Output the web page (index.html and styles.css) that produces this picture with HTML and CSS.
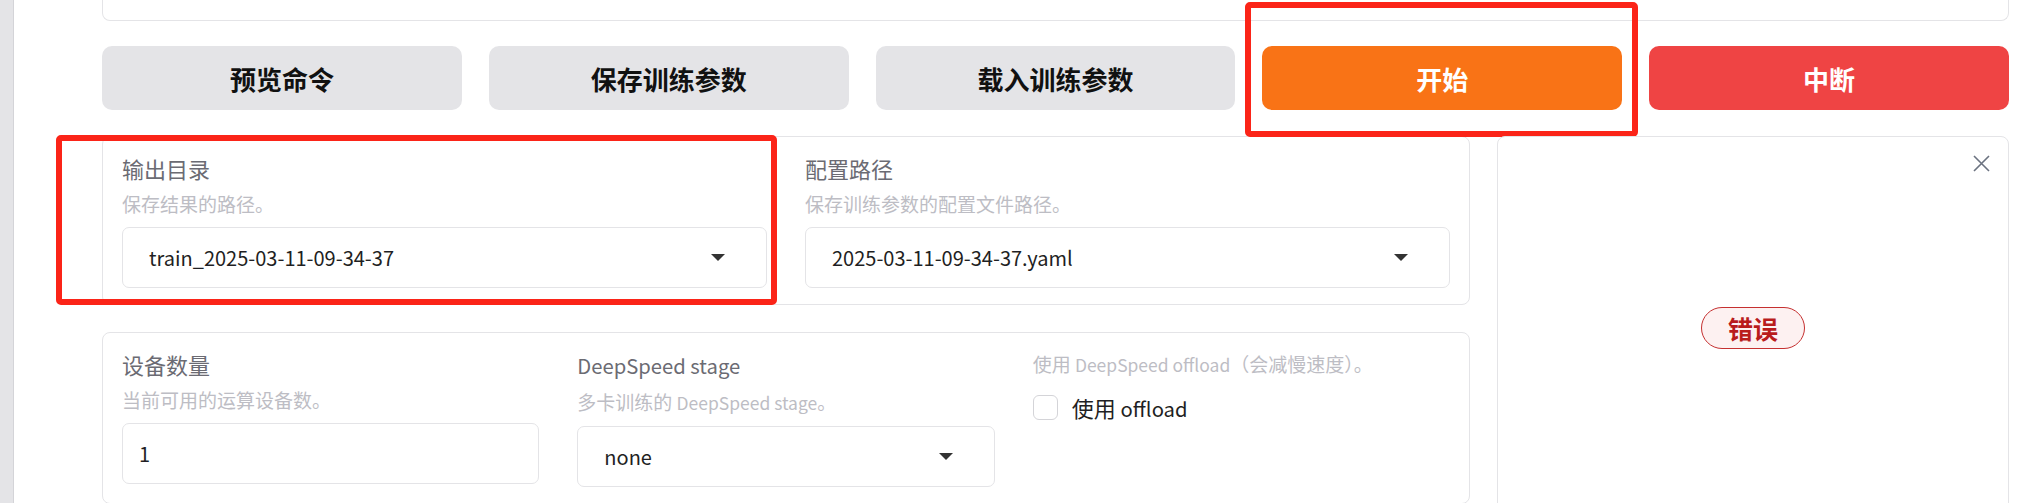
FILE: index.html
```html
<!DOCTYPE html>
<html lang="zh-CN">
<head>
<meta charset="utf-8">
<title>训练</title>
<link rel="stylesheet" href="styles.css">
</head>
<body>
<div class="page">
  <div class="rail"></div>
  <main class="main">
    <div class="top-card"></div>

    <div class="actions">
      <button class="btn btn-gray">预览命令</button>
      <button class="btn btn-gray">保存训练参数</button>
      <button class="btn btn-gray">载入训练参数</button>
      <div class="btn-wrap mark-start">
        <button class="btn btn-primary">开始</button>
      </div>
      <button class="btn btn-stop">中断</button>
    </div>

    <div class="panel-grid">
      <div class="left-col">
        <section class="card cols-2">
          <div class="field mark-field">
            <div class="label">输出目录</div>
            <div class="info">保存结果的路径。</div>
            <div class="dropdown">
              <span class="value">train_2025-03-11-09-34-37</span>
              <svg class="caret" width="14" height="7" viewBox="0 0 14 7"><polygon points="0,0 14,0 7,7" fill="#333"/></svg>
            </div>
          </div>
          <div class="field">
            <div class="label">配置路径</div>
            <div class="info">保存训练参数的配置文件路径。</div>
            <div class="dropdown">
              <span class="value">2025-03-11-09-34-37.yaml</span>
              <svg class="caret" width="14" height="7" viewBox="0 0 14 7"><polygon points="0,0 14,0 7,7" fill="#333"/></svg>
            </div>
          </div>
        </section>

        <section class="card cols-3">
          <div class="field">
            <div class="label">设备数量</div>
            <div class="info">当前可用的运算设备数。</div>
            <div class="textbox"><span class="value">1</span></div>
          </div>
          <div class="field">
            <div class="label"><span class="latin">DeepSpeed stage</span></div>
            <div class="info">多卡训练的 <span class="latin">DeepSpeed stage</span>。</div>
            <div class="dropdown">
              <span class="value">none</span>
              <svg class="caret" width="14" height="7" viewBox="0 0 14 7"><polygon points="0,0 14,0 7,7" fill="#333"/></svg>
            </div>
          </div>
          <div class="field">
            <div class="info info-top">使用 <span class="latin">DeepSpeed offload</span>（会减慢速度）。</div>
            <label class="check-row">
              <span class="checkbox"></span>
              <span class="check-label">使用 <span class="latin">offload</span></span>
            </label>
          </div>
        </section>
      </div>

      <aside class="card status-card">
        <button class="close" aria-label="关闭">
          <svg width="17" height="17" viewBox="0 0 17 17"><path d="M1 1 L16 16 M16 1 L1 16" stroke="#6b7280" stroke-width="1.6" fill="none"/></svg>
        </button>
        <span class="badge">错误</span>
      </aside>
    </div>
  </main>
</div>
</body>
</html>
```

FILE: styles.css
```css
* {
  box-sizing: border-box;
}

html, body {
  margin: 0;
  padding: 0;
  background: #ffffff;
  font-family: "Noto Sans CJK SC", "Noto Sans", sans-serif;
  overflow: hidden;
}

.page {
  display: flex;
  min-height: 503px;
}

.rail {
  width: 14px;
  flex: none;
  background: #e4e4e7;
  border-right: 1px solid #d4d4d8;
}

.main {
  flex: 1;
  padding: 0 34px 0 88px;
  display: flex;
  flex-direction: column;
}

.top-card {
  height: 21px;
  border: 1px solid #e4e4e7;
  border-top: none;
  border-radius: 0 0 8px 8px;
  margin-bottom: 25px;
}

.actions {
  display: grid;
  grid-template-columns: repeat(5, 1fr);
  gap: 27px;
  margin-bottom: 26px;
}

.btn {
  height: 64px;
  width: 100%;
  border: none;
  border-radius: 10px;
  font-family: "Noto Sans CJK SC", sans-serif;
  font-size: 26px;
  font-weight: 700;
  cursor: pointer;
}

.btn-gray {
  background: #e4e4e7;
  color: #111111;
}

.btn-primary {
  background: #f97316;
  color: #ffffff;
}

.btn-stop {
  background: #ef4444;
  color: #ffffff;
}

.btn-wrap {
  position: relative;
}

.mark-start::after {
  content: "";
  position: absolute;
  left: -17px;
  right: -16px;
  top: -44px;
  bottom: -27px;
  border: 6px solid #fb2418;
  border-radius: 5px;
  pointer-events: none;
}

.panel-grid {
  display: grid;
  grid-template-columns: 1368px 1fr;
  gap: 27px;
  align-items: start;
}

.left-col {
  display: flex;
  flex-direction: column;
  gap: 27px;
}

.card {
  border: 1px solid #e4e4e7;
  border-radius: 8px;
  background: #ffffff;
  padding: 17px 19px 16px 19px;
}

.cols-2 {
  display: grid;
  grid-template-columns: 1fr 1fr;
  column-gap: 38px;
}

.cols-3 {
  display: grid;
  grid-template-columns: 1fr 1fr 1fr;
  column-gap: 38px;
}

.field {
  display: flex;
  flex-direction: column;
  position: relative;
}

.mark-field::after {
  content: "";
  position: absolute;
  left: -66px;
  right: -10px;
  top: -19px;
  bottom: -17px;
  border: 6px solid #fb2418;
  border-radius: 5px;
  pointer-events: none;
}

.label {
  font-size: 22px;
  line-height: 28px;
  color: #6b6b73;
  margin-bottom: 10px;
}

.latin {
  font-size: 0.92em;
}

.info {
  font-size: 19px;
  line-height: 24px;
  color: #bdbdc4;
  margin-bottom: 11px;
}

.info-top {
  line-height: 28px;
  margin-bottom: 16px;
}

.dropdown,
.textbox {
  height: 61px;
  border: 1px solid #e4e4e7;
  border-radius: 7px;
  display: flex;
  align-items: center;
  background: #ffffff;
}

.dropdown {
  padding: 0 41px 0 26px;
  justify-content: space-between;
}

.textbox {
  padding: 0 16px;
}

.value {
  font-size: 20px;
  color: #1f1f23;
}

.caret {
  flex: none;
}

.check-row {
  display: flex;
  align-items: center;
  gap: 14px;
  height: 24px;
}

.checkbox {
  width: 25px;
  height: 25px;
  border: 1px solid #d4d4d8;
  border-radius: 6px;
  background: #ffffff;
  flex: none;
}

.check-label {
  font-size: 22px;
  color: #1f1f23;
}

.status-card {
  position: relative;
  min-height: 384px;
  display: flex;
  align-items: center;
  justify-content: center;
  padding: 0;
}

.close {
  position: absolute;
  top: 18px;
  right: 18px;
  width: 17px;
  height: 17px;
  padding: 0;
  border: none;
  background: transparent;
  display: flex;
}

.badge {
  display: inline-block;
  height: 42px;
  line-height: 40px;
  padding: 0 26px;
  border: 1px solid #c53030;
  border-radius: 999px;
  background: #fdf1f1;
  color: #b91c1c;
  font-size: 25px;
  font-weight: 700;
}
```
